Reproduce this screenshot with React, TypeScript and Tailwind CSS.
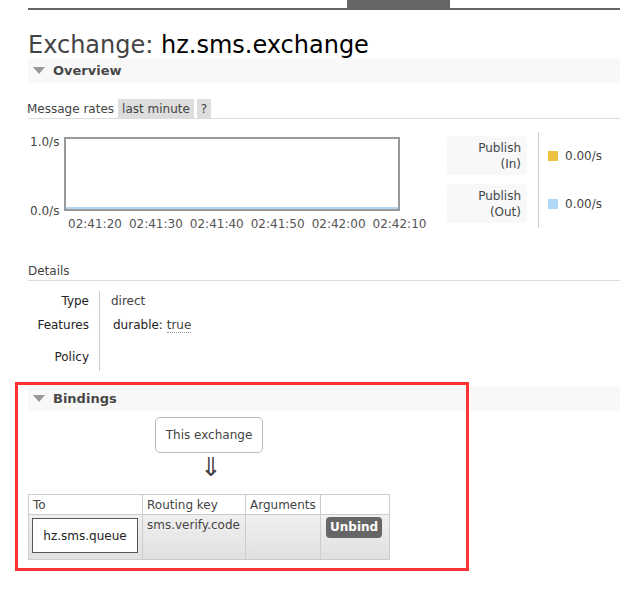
import React from "react";

const font = { fontFamily: '"DejaVu Sans", Verdana, sans-serif' };

function Tri() {
  return (
    <svg width="12" height="8" viewBox="0 0 12 8" className="mr-[8px]">
      <path d="M0 0 L12 0 L6 7 Z" fill="#999" />
    </svg>
  );
}

export default function App() {
  const times = ["02:41:20", "02:41:30", "02:41:40", "02:41:50", "02:42:00", "02:42:10"];
  return (
    <div className="relative w-[620px] h-[592px] bg-white overflow-hidden text-[12px] text-[#444]" style={font}>
      {/* top nav line */}
      <div className="ml-[28px] h-[10px] border-b-2 border-[#666] flex">
        <div className="ml-[319px] w-[103px] h-[8px] bg-[#666]" />
      </div>

      <div className="ml-[28px] mt-[20px] text-[24px] leading-[30px] text-[#444]">
        Exchange: <span className="text-[#000]">hz.sms.exchange</span>
      </div>

      <div className="ml-[28px] mt-[-2px] h-[25px] bg-[#f8f8f8] flex items-center pl-[5px] font-bold text-[13px] text-[#484848]">
        <Tri />
        Overview
      </div>

      <div className="ml-[28px] mt-[16px] flex items-end h-[20px] border-b border-[#ddd] text-[12px]">
        <span className="mr-[4px] leading-[17px] ml-[-1px]">Message rates</span>
        <span className="bg-[#ddd] px-[4px] h-[19px] leading-[20px] mr-[3px]">last minute</span>
        <span className="bg-[#ddd] px-[4px] h-[19px] leading-[20px]">?</span>
      </div>

      {/* chart + legend */}
      <div className="ml-[28px] mt-[13px] flex">
        <div className="relative w-[405px] h-[100px]">
          <div className="absolute left-[2px] top-[1px] text-[12px]">1.0/s</div>
          <div className="absolute left-[2px] top-[70px] text-[12px]">0.0/s</div>
          <div className="absolute left-[36px] top-[5px] w-[336px] h-[74px] border-2 border-[#999]">
            <div className="absolute left-0 right-0 bottom-0 h-[2px] bg-[#afd8f8]" />
          </div>
          <div className="absolute left-[40px] top-[83px] flex gap-[7px] text-[12px] text-[#545454] whitespace-nowrap">
            {times.map((t) => (
              <span key={t}>{t}</span>
            ))}
          </div>
        </div>
        <div className="ml-[14px] mt-[4px] flex flex-col gap-[9px]">
          <div className="w-[80px] h-[39px] bg-[#f8f8f8] rounded-[3px] text-right pr-[6px] flex flex-col justify-center leading-[16px]">
            <span>Publish</span>
            <span>(In)</span>
          </div>
          <div className="w-[80px] h-[39px] bg-[#f8f8f8] rounded-[3px] text-right pr-[6px] flex flex-col justify-center leading-[16px]">
            <span>Publish</span>
            <span>(Out)</span>
          </div>
        </div>
        <div className="ml-[11px] w-px h-[96px] bg-[#ccc]" />
        <div className="ml-[9px] mt-[4px] flex flex-col gap-[9px]">
          <div className="h-[39px] flex items-center gap-[7px]">
            <span className="w-[10px] h-[10px] bg-[#edc240]" />
            <span>0.00/s</span>
          </div>
          <div className="h-[39px] flex items-center gap-[7px]">
            <span className="w-[10px] h-[10px] bg-[#afd8f8]" />
            <span>0.00/s</span>
          </div>
        </div>
      </div>

      {/* Details */}
      <div className="ml-[28px] mt-[30px] border-b border-[#ddd] pb-0 text-[12px]">Details</div>
      <div className="ml-[28px] mt-[10px] flex">
        <div className="w-[61px] flex flex-col items-end text-[#222]">
          <div className="h-[25px] pt-[1px]">Type</div>
          <div className="h-[31px]">Features</div>
          <div className="h-[25px] pt-[1px]">Policy</div>
        </div>
        <div className="ml-[10px] w-px h-[80px] bg-[#ccc]" />
        <div className="ml-[11px] flex flex-col">
          <div className="h-[25px] pt-[1px]">direct</div>
          <div className="h-[31px] pl-[2px]">
            <span className="text-[#222]">durable:</span>{" "}
            <span className="border-b border-dotted border-[#999]">true</span>
          </div>
        </div>
      </div>

      {/* Bindings */}
      <div className="ml-[28px] mt-[14px] h-[25px] bg-[#f8f8f8] flex items-center pl-[5px] font-bold text-[13px] text-[#484848]">
        <Tri />
        Bindings
      </div>
      <div className="ml-[155px] mt-[6px] w-[108px] h-[36px] border border-[#bbb] rounded-[5px] flex items-center justify-center">
        This exchange
      </div>
      <div className="ml-[200px] mt-[2px] h-[25px] text-[26px] leading-[25px] text-[#444] font-light">⇓</div>
      <div className="mt-[14px]" />
      <table className="ml-[28px] border-collapse text-[12px]">
        <thead>
          <tr className="h-[20px] bg-white">
            <th className="w-[114px] border border-[#ccc] text-left font-normal px-[4px]">To</th>
            <th className="w-[103px] border border-[#ccc] text-left font-normal px-[4px]">Routing key</th>
            <th className="w-[75px] border border-[#ccc] text-left font-normal px-[4px]">Arguments</th>
            <th className="w-[69px] border border-[#ccc]" />
          </tr>
        </thead>
        <tbody>
          <tr className="h-[45px] bg-gradient-to-b from-[#f0f0f0] to-[#e0e0e0]">
            <td className="border border-[#ccc] p-[3px] align-top">
              <div className="w-[106px] h-[35px] bg-white border border-[#555] flex items-center justify-center text-[#222]">
                hz.sms.queue
              </div>
            </td>
            <td className="border border-[#ccc] px-[4px] pt-[1px] align-top">sms.verify.code</td>
            <td className="border border-[#ccc]" />
            <td className="border border-[#ccc] align-top pt-[2px] pl-[5px] pr-[4px]">
              <span className="inline-block bg-[#666] text-white font-bold rounded-[4px] px-[4px] h-[21px] leading-[21px]">
                Unbind
              </span>
            </td>
          </tr>
        </tbody>
      </table>

      {/* red annotation */}
      <div className="absolute left-[15px] top-[382px] w-[454px] h-[189px] border-[3px] border-[#f33] pointer-events-none" />
    </div>
  );
}
